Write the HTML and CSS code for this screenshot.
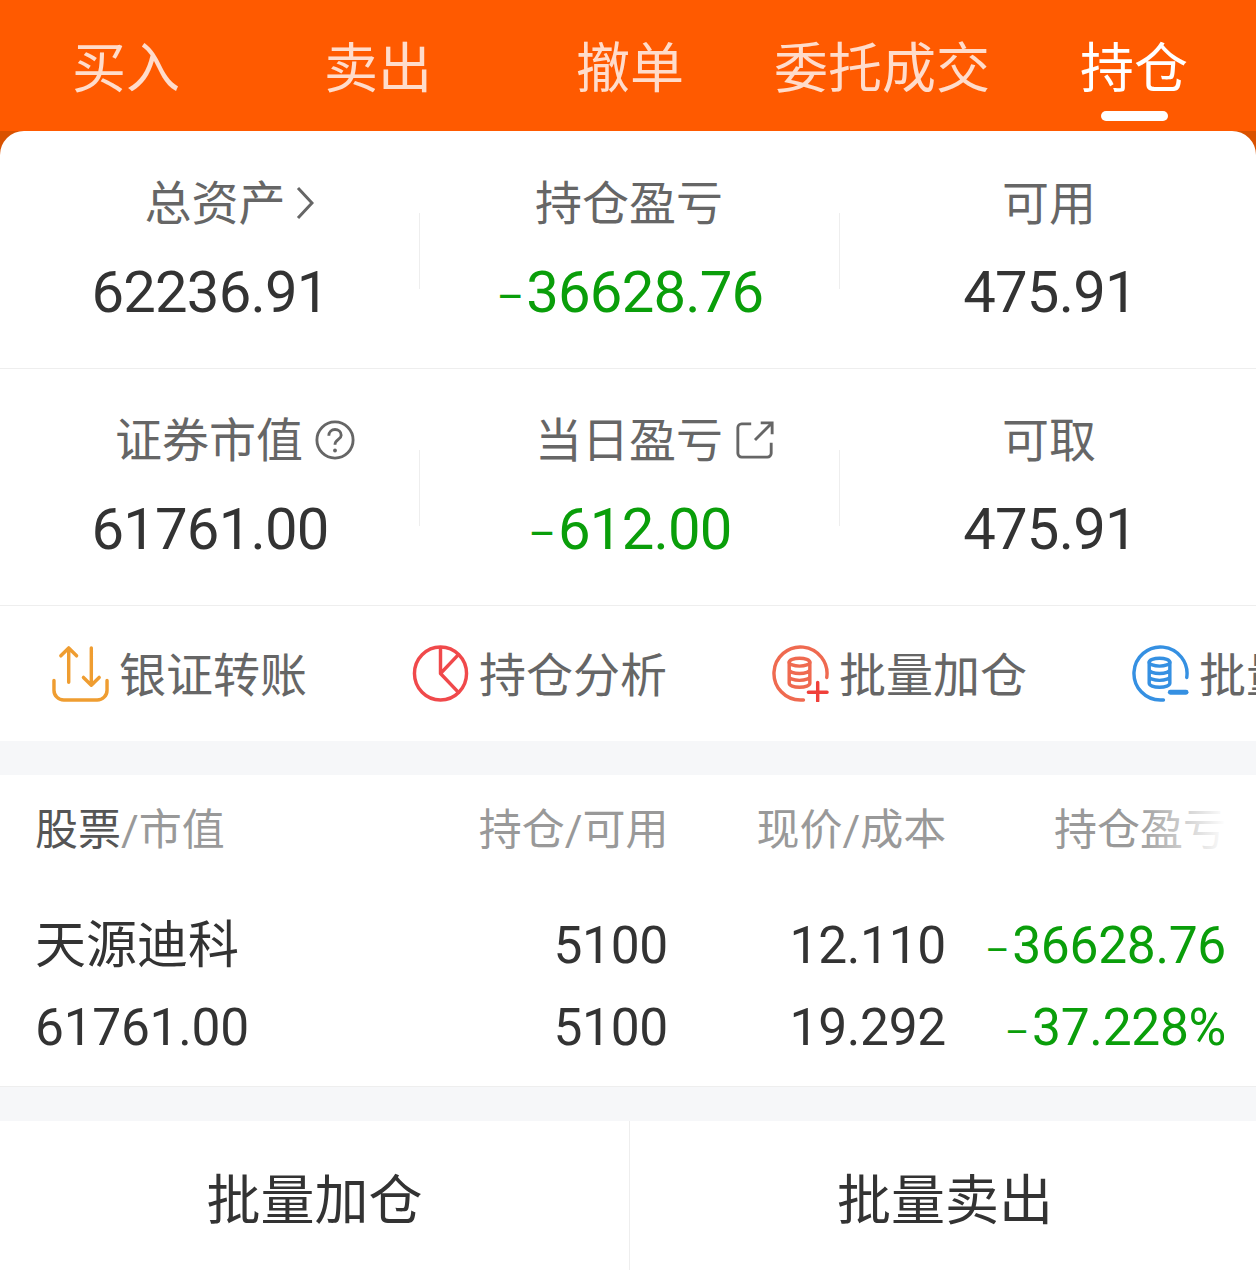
FILE: index.html
```html
<!DOCTYPE html>
<html lang="zh-CN">
<head>
    <meta charset="UTF-8">
    <meta name="viewport" content="width=device-width, initial-scale=1.0">
    <title>持仓</title>
    <link rel="stylesheet" href="styles.css">
</head>
<body>

<!-- Tabs -->
<div class="tabs">
    <div class="tab">买入</div>
    <div class="tab">卖出</div>
    <div class="tab">撤单</div>
    <div class="tab">委托成交</div>
    <div class="tab tab-active">持仓</div>
</div>

<div class="sheet">
    <!-- Summary -->
    <div class="stat-row">
        <div class="stat">
            <div class="stat-label">总资产
                <svg class="chevron" viewBox="0 0 18 34"><path d="M2 2l14 15L2 32"/></svg>
            </div>
            <div class="stat-value">62236.91</div>
        </div>
        <div class="stat">
            <div class="stat-label">持仓盈亏</div>
            <div class="stat-value green"><span class="minus">–</span>36628.76</div>
        </div>
        <div class="stat">
            <div class="stat-label">可用</div>
            <div class="stat-value">475.91</div>
        </div>
    </div>
    <div class="stat-row">
        <div class="stat">
            <div class="stat-label">证券市值
                <svg class="label-icon" viewBox="0 0 42 42">
                    <circle cx="21" cy="21" r="19"/>
                    <path d="M14.500 16.500c0-4 3-6.500 6.500-6.500s6.500 2.500 6.500 6c0 4.500-6.500 4.500-6.500 10"/>
                    <circle class="dot" cx="21" cy="32" r="2"/>
                </svg>
            </div>
            <div class="stat-value">61761.00</div>
        </div>
        <div class="stat">
            <div class="stat-label">当日盈亏
                <svg class="label-icon" viewBox="0 0 42 42">
                    <path d="M17 4H7a4 4 0 0 0-4 4v27a4 4 0 0 0 4 4h27a4 4 0 0 0 4-4V24"/>
                    <path d="M21 21L38 4M27 3h12v12"/>
                </svg>
            </div>
            <div class="stat-value green"><span class="minus">–</span>612.00</div>
        </div>
        <div class="stat">
            <div class="stat-label">可取</div>
            <div class="stat-value">475.91</div>
        </div>
    </div>

    <!-- Shortcuts -->
    <div class="shortcuts">
        <div class="shortcut">
            <svg class="shortcut-icon icon-orange" viewBox="0 0 58 58">
                <path d="M2 36v10a10 10 0 0 0 10 10h34a10 10 0 0 0 10-10V36"/>
                <path d="M17 38V3M9 11l8-8 8 8M40 3v38M32 33l8 8 8-8"/>
            </svg>
            <span>银证转账</span>
        </div>
        <div class="shortcut">
            <svg class="shortcut-icon icon-red" viewBox="0 0 58 58">
                <ellipse cx="29" cy="29" rx="26.500" ry="27"/>
                <path d="M29 3v26l18 19M29 29l18-19"/>
            </svg>
            <span>持仓分析</span>
        </div>
        <div class="shortcut">
            <svg class="shortcut-icon icon-coral" viewBox="0 0 58 58">
                <path d="M55.700 33A27 27 0 1 0 29 56h3"/>
                <ellipse cx="28" cy="17.500" rx="10.500" ry="4"/>
                <path d="M17.500 17.500v21.500c0 2.200 4.500 4 10.500 4s10.500-1.800 10.500-4V17.500M17.500 25c0 2.200 4.500 4 10.500 4s10.500-1.800 10.500-4M17.500 32c0 2.200 4.500 4 10.500 4s10.500-1.800 10.500-4"/>
                <path class="sign" d="M37 48h19M46.500 38v19"/>
            </svg>
            <span>批量加仓</span>
        </div>
        <div class="shortcut">
            <svg class="shortcut-icon icon-blue" viewBox="0 0 58 58">
                <path d="M55.700 33A27 27 0 1 0 29 56h3"/>
                <ellipse cx="28" cy="17.500" rx="10.500" ry="4"/>
                <path d="M17.500 17.500v21.500c0 2.200 4.500 4 10.500 4s10.500-1.800 10.500-4V17.500M17.500 25c0 2.200 4.500 4 10.500 4s10.500-1.800 10.500-4M17.500 32c0 2.200 4.500 4 10.500 4s10.500-1.800 10.500-4"/>
                <path class="sign" d="M39 48h16"/>
            </svg>
            <span>批量卖出</span>
        </div>
    </div>

    <div class="band"></div>

    <!-- Holdings -->
    <div class="holdings">
        <div class="holdings-head">
            <div class="col-name"><b>股票</b>/市值</div>
            <div class="col-num col-qty">持仓/可用</div>
            <div class="col-num col-price">现价/成本</div>
            <div class="col-num col-profit">持仓盈亏</div>
            <div class="head-fade"></div>
        </div>
        <div class="holding">
            <div class="col-name">
                <div class="stock-name">天源迪科</div>
                <div class="cell">61761.00</div>
            </div>
            <div class="col-num col-qty">
                <div class="cell">5100</div>
                <div class="cell">5100</div>
            </div>
            <div class="col-num col-price">
                <div class="cell">12.110</div>
                <div class="cell">19.292</div>
            </div>
            <div class="col-num col-profit green">
                <div class="cell"><span class="minus">–</span>36628.76</div>
                <div class="cell"><span class="minus">–</span>37.228%</div>
            </div>
        </div>
    </div>

    <div class="band"></div>

    <!-- Bottom buttons -->
    <div class="actions">
        <div class="action">批量加仓</div>
        <div class="action">批量卖出</div>
    </div>
</div>

</body>
</html>
```
FILE: styles.css
```css
/* General Styles */
html, body {
    height: 100%;
}

body {
    margin: 0;
    width: 1256px;
    height: 1270px;
    overflow: hidden;
    background-color: #d95200;
    font-family: "Roboto", "Noto Sans CJK SC", sans-serif;
    color: #333;
}

.green {
    color: #0a9e0a;
}

.minus {
    margin-right: 3px;
    font-size: 0.72em;
}

/* Tabs */
.tabs {
    display: flex;
    height: 131px;
    background-color: #ff5a00;
}

.tab {
    position: relative;
    flex: none;
    width: 252px;
    padding-top: 31px;
    box-sizing: border-box;
    text-align: center;
    font-size: 54px;
    line-height: 78px;
    color: #ffdccb;
}

.tab-active {
    color: #fff;
}

.tab-active::after {
    content: "";
    position: absolute;
    left: 93px;
    bottom: 10px;
    width: 67px;
    height: 10px;
    border-radius: 5px;
    background-color: #fff;
}

.sheet {
    height: 1139px;
    padding-top: 1px;
    box-sizing: border-box;
    background-color: #fff;
    border-radius: 24px 24px 0 0;
    overflow: hidden;
}

/* Summary */
.stat-row {
    display: flex;
    height: 237px;
    box-sizing: border-box;
    border-bottom: 1px solid #eeeeee;
}

.stat {
    position: relative;
    flex: none;
    width: 420px;
    padding-top: 33px;
    box-sizing: border-box;
    text-align: center;
}

.stat:not(:last-child)::after {
    content: "";
    position: absolute;
    right: 0;
    top: 81px;
    width: 1px;
    height: 76px;
    background-color: #eeeeee;
}

.stat-label {
    display: flex;
    justify-content: center;
    align-items: center;
    gap: 12px;
    height: 68px;
    padding-right: 2px;
    font-size: 47px;
    color: #666;
}

/* icons hang off the label, the text stays centred */
.chevron {
    width: 18px;
    height: 34px;
    margin: 8px -40px 0 -2px;
    fill: none;
    stroke: #666;
    stroke-width: 3;
}

.label-icon {
    width: 40px;
    height: 40px;
    margin: 8px -52px 0 0;
    fill: none;
    stroke: #666;
    stroke-width: 3;
}

.label-icon .dot {
    fill: #666;
    stroke: none;
}

.stat-value {
    margin-top: 24px;
    font-size: 58px;
    line-height: 70px;
    letter-spacing: -0.800px;
}

/* Shortcuts */
.shortcuts {
    display: flex;
    height: 135px;
    padding-left: 52px;
    overflow: hidden;
}

.shortcut {
    display: flex;
    flex: none;
    align-items: center;
    gap: 10px;
    width: 360px;
    height: 131px;
    font-size: 47px;
    color: #666;
}

.shortcut-icon {
    flex: none;
    width: 57px;
    height: 57px;
    margin-top: 4px;
    fill: none;
    stroke-width: 3.500;
    stroke-linecap: round;
    stroke-linejoin: round;
}

.icon-orange {
    stroke: #ef9d31;
}

.icon-red {
    stroke: #f0494b;
}

.icon-coral {
    stroke: #ef6a50;
}

.icon-coral .sign {
    stroke: #f0403a;
}

.icon-blue {
    stroke: #3590e2;
}

.icon-blue .sign {
    stroke-width: 5;
}

.band {
    height: 34px;
    background-color: #f6f7f9;
}

/* Holdings */
.holdings {
    border-bottom: 1px solid #eeeeee;
}

.holdings-head {
    position: relative;
    display: flex;
    height: 110px;
    padding: 0 30px 0 35px;
    align-items: center;
    font-size: 43px;
    color: #999;
}

.holdings-head .col-name,
.holdings-head .col-num {
    margin-top: -8px;
}

.holdings-head .col-name {
    width: 401px;
}

.holdings-head b {
    font-weight: normal;
    color: #555;
}

.head-fade {
    position: absolute;
    right: 30px;
    top: 20px;
    width: 90px;
    height: 70px;
    background: linear-gradient(to right, rgba(255, 255, 255, 0), #fff);
}

.holding {
    display: flex;
    height: 201px;
    padding: 20px 30px 0 35px;
    box-sizing: border-box;
}

.col-name {
    width: 400px;
}

.col-num {
    text-align: right;
}

.col-qty {
    width: 233px;
}

.col-price {
    width: 278px;
}

.col-profit {
    width: 280px;
}

.stock-name {
    height: 82px;
    font-size: 51px;
    line-height: 82px;
    color: #333;
}

.cell {
    height: 82px;
    font-size: 51.500px;
    line-height: 82px;
    letter-spacing: -0.300px;
}

/* Bottom buttons */
.actions {
    display: flex;
    height: 149px;
}

.action {
    flex: none;
    width: 630px;
    box-sizing: border-box;
    text-align: center;
    font-size: 54px;
    line-height: 162px;
    color: #333;
}

.action:first-child {
    border-right: 1px solid #eeeeee;
}
```
